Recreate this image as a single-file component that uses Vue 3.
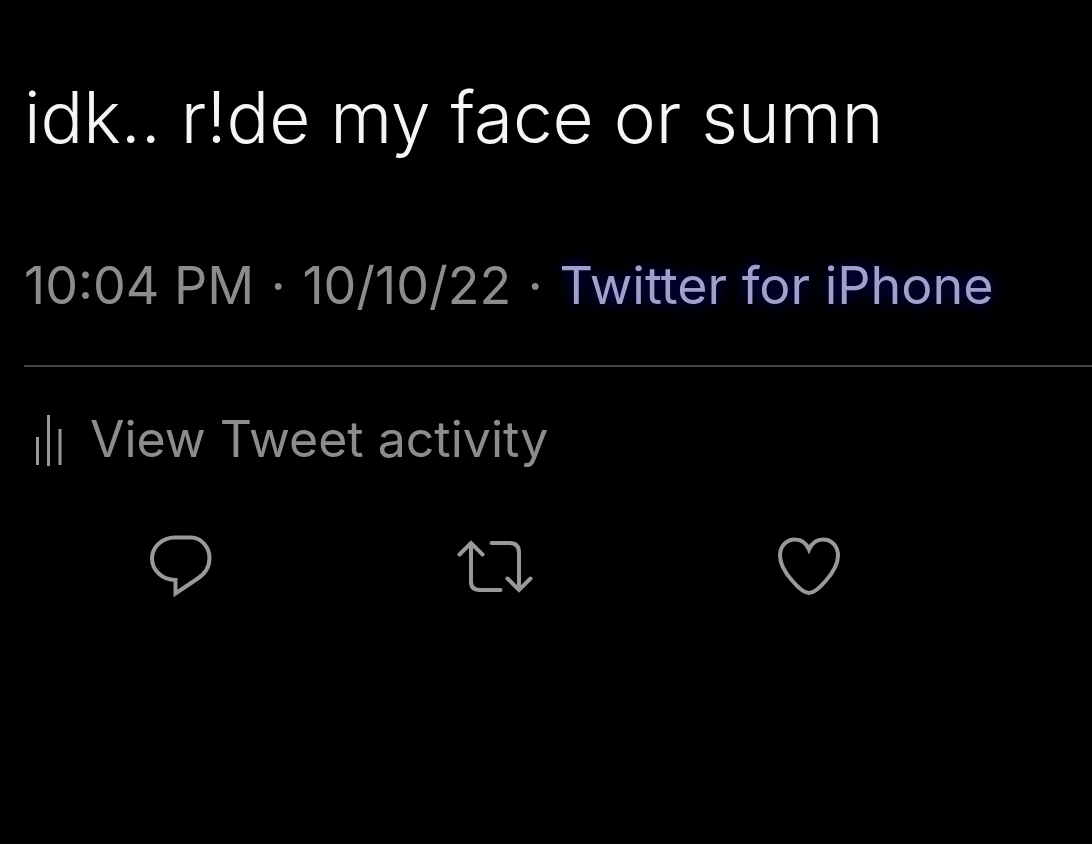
<script setup>
const message = 'idk.. r!de my face or sumn'
const postedTime = '10:04 PM'
const postedDate = '10/10/22'
</script>

<template>
  <article class="tweet">
    <p class="message">{{ message }}</p>
    <p class="meta">
      <time>{{ postedTime }} <span class="dot">·</span> {{ postedDate }}</time> <span class="dot">·</span> <a class="source" href="#">Twitter for iPhone</a>
    </p>
    <a class="activity" href="#">
      <svg class="bars" viewBox="0 0 32 56" aria-hidden="true">
        <path d="M5.500 26V54M16.500 4V55M28 18V54" />
      </svg>
      <span>View Tweet activity</span>
    </a>
    <div class="actions">
      <button type="button" aria-label="Reply">
        <svg class="icon" viewBox="0 0 80 72" aria-hidden="true">
          <path d="M34 10.500H50C60 10.500 68.500 20 68.500 31C68.500 41 64 47 56 52L34.500 66.500V53C21 53 11 43 11 31.500C11 20 21 10.500 34 10.500Z" />
        </svg>
      </button>
      <button type="button" aria-label="Retweet">
        <svg class="icon" viewBox="0 0 80 72" aria-hidden="true">
          <path d="M4.500 27.500L16 16L27.500 27.500M16 17V54.500Q16 63 24.500 63H45.500M36.500 16H54.500Q64 16 64 25.500V61.500M52.500 51.500L64 63L75.500 51.500" />
        </svg>
      </button>
      <button type="button" aria-label="Like">
        <svg class="icon" viewBox="0 0 80 72" aria-hidden="true">
          <path d="M40 22.500C37 15.500 32 12.500 26 12.500C17 12.500 11 19.500 11 28.500C11 37.500 16 45.500 23 53.500C29 60.500 36 66 40 66S51 60.500 57 53.500C64 45.500 69 37.500 69 28.500C69 19.500 63 12.500 54 12.500C48 12.500 43 15.500 40 22.500Z" />
        </svg>
      </button>
    </div>
  </article>
</template>

<style>
body {
  margin: 0;
  background: #000;
}
</style>

<style scoped>
.tweet {
  box-sizing: border-box;
  min-height: 100vh;
  padding: 71px 0 24px 24px;
  background: #000;
  color: #8c8c8c;
  font-family: Inter, "Liberation Sans", sans-serif;
  font-weight: 400;
  overflow: hidden;
}

.message {
  margin: 0;
  color: #f5f5f5;
  font-size: 71px;
  font-weight: 300;
  line-height: 92px;
}

.meta {
  margin: 85px 0 0;
  padding-bottom: 41px;
  border-bottom: 2px solid #444;
  font-size: 52px;
  line-height: 76px;
}

.dot {
  margin: 0 2px;
}

.source {
  color: #a29fca;
  text-decoration: none;
  text-shadow: 0 0 16px #080880;
}

.activity {
  display: flex;
  align-items: center;
  gap: 26px;
  margin-top: 36px;
  padding-left: 8px;
  color: inherit;
  font-size: 50px;
  line-height: 72px;
  text-decoration: none;
}

.bars {
  width: 32px;
  height: 56px;
  fill: none;
  stroke: #999;
  stroke-width: 3;
}

.actions {
  display: grid;
  grid-template-columns: repeat(3, 1fr);
  justify-items: center;
  margin: 52px 126px 0 0;
}

.actions button {
  display: flex;
  padding: 0;
  border: 0;
  background: none;
  color: #999;
}

.icon {
  width: 80px;
  height: 72px;
  fill: none;
  stroke: currentColor;
  stroke-width: 4;
  stroke-linecap: round;
  stroke-linejoin: miter;
}
</style>
